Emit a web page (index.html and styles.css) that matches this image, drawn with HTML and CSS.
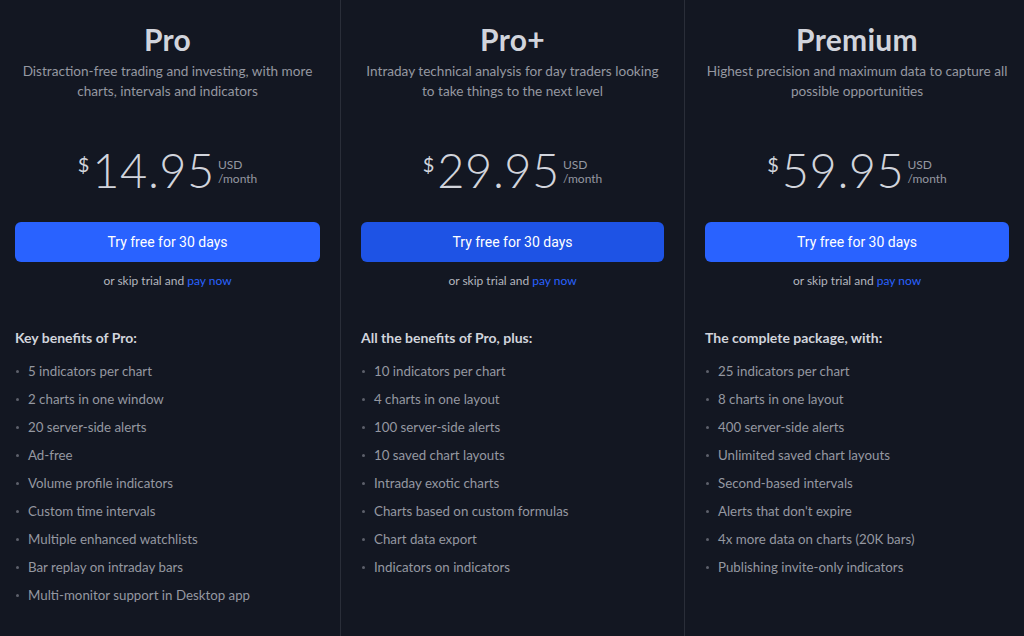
FILE: index.html
```html
<!DOCTYPE html>
<html lang="en">
<head>
<meta charset="utf-8">
<title>Plans</title>
<link rel="stylesheet" href="styles.css">
</head>
<body>
<main class="plans">
  <section class="plan">
    <h2 class="plan-title">Pro</h2>
    <p class="plan-desc">Distraction-free trading and investing, with more charts, intervals and indicators</p>
    <div class="price"><span class="cur">$</span><span class="amount">14.95</span><span class="unit"><span>USD</span><span>/month</span></span></div>
    <button class="cta">Try free for 30 days</button>
    <p class="skip">or skip trial and <a href="#">pay now</a></p>
    <h3 class="bhead">Key benefits of Pro:</h3>
    <ul class="benefits">
      <li>5 indicators per chart</li>
      <li>2 charts in one window</li>
      <li>20 server-side alerts</li>
      <li>Ad-free</li>
      <li>Volume profile indicators</li>
      <li>Custom time intervals</li>
      <li>Multiple enhanced watchlists</li>
      <li>Bar replay on intraday bars</li>
      <li>Multi-monitor support in Desktop app</li>
    </ul>
  </section>
  <section class="plan">
    <h2 class="plan-title">Pro+</h2>
    <p class="plan-desc">Intraday technical analysis for day traders looking to take things to the next level</p>
    <div class="price"><span class="cur">$</span><span class="amount">29.95</span><span class="unit"><span>USD</span><span>/month</span></span></div>
    <button class="cta cta-hover">Try free for 30 days</button>
    <p class="skip">or skip trial and <a href="#">pay now</a></p>
    <h3 class="bhead">All the benefits of Pro, plus:</h3>
    <ul class="benefits">
      <li>10 indicators per chart</li>
      <li>4 charts in one layout</li>
      <li>100 server-side alerts</li>
      <li>10 saved chart layouts</li>
      <li>Intraday exotic charts</li>
      <li>Charts based on custom formulas</li>
      <li>Chart data export</li>
      <li>Indicators on indicators</li>
    </ul>
  </section>
  <section class="plan">
    <h2 class="plan-title">Premium</h2>
    <p class="plan-desc">Highest precision and maximum data to capture all possible opportunities</p>
    <div class="price"><span class="cur">$</span><span class="amount">59.95</span><span class="unit"><span>USD</span><span>/month</span></span></div>
    <button class="cta">Try free for 30 days</button>
    <p class="skip">or skip trial and <a href="#">pay now</a></p>
    <h3 class="bhead">The complete package, with:</h3>
    <ul class="benefits">
      <li>25 indicators per chart</li>
      <li>8 charts in one layout</li>
      <li>400 server-side alerts</li>
      <li>Unlimited saved chart layouts</li>
      <li>Second-based intervals</li>
      <li>Alerts that don't expire</li>
      <li>4x more data on charts (20K bars)</li>
      <li>Publishing invite-only indicators</li>
    </ul>
  </section>
</main>
</body>
</html>
```

FILE: styles.css
```css
* { box-sizing: border-box; }
html, body { margin: 0; padding: 0; }
body {
  background: #131722;
  color: #d1d4dc;
  font-family: "Lato", "DejaVu Sans", sans-serif;
  width: 1024px;
  height: 636px;
  overflow: hidden;
}
.plans {
  display: grid;
  grid-template-columns: 346px 344px 344px;
  margin-left: -5px;
  height: 636px;
}
.plan {
  display: flex;
  flex-direction: column;
  padding: 20px 20px 0 20px;
  border-right: 1px solid #2a2e39;
}
.plan:last-child { border-right: none; }
.plan-title {
  margin: 0;
  text-align: center;
  font-size: 30px;
  line-height: 38px;
  font-weight: 700;
  color: #d1d4dc;
  letter-spacing: 0.3px;
}
.plan-desc {
  margin: 4px -2px 0;
  text-align: center;
  font-size: 13.6px;
  line-height: 19.5px;
  color: #9598a1;
  height: 40px;
}
.price {
  display: flex;
  justify-content: center;
  align-items: flex-start;
  margin-top: 43px;
  height: 50px;
}
.cur {
  font-weight: 400;
  font-size: 20px;
  line-height: 22px;
  margin-top: 8px;
  margin-right: 3px;
  color: #d1d4dc;
}
.amount {
  font-weight: 300;
  font-size: 47px;
  line-height: 50px;
  letter-spacing: 0.5px;
  color: #d1d4dc;
}
.unit {
  display: flex;
  flex-direction: column;
  font-size: 12px;
  line-height: 14px;
  color: #9598a1;
  margin-top: 13px;
  margin-left: 3px;
}
.cta {
  margin-top: 27px;
  height: 40px;
  border: none;
  border-radius: 6px;
  background: #2962ff;
  color: #ffffff;
  font-family: "Roboto", "Liberation Sans", sans-serif;
  font-size: 14px;
  font-weight: 400;
  cursor: pointer;
}
.cta-hover { background: #1e53e5; }
.skip {
  margin: 11px 0 0;
  text-align: center;
  font-size: 12px;
  line-height: 16px;
  color: #b2b5be;
}
.skip a { color: #2962ff; text-decoration: none; }
.bhead {
  margin: 39px 0 0;
  font-size: 14px;
  line-height: 20px;
  font-weight: 700;
  color: #d1d4dc;
}
.benefits {
  list-style: none;
  margin: 13px 0 0;
  padding: 0;
}
.benefits li {
  position: relative;
  padding-left: 13px;
  font-size: 13.3px;
  line-height: 20px;
  margin-bottom: 8px;
  color: #9598a1;
}
.benefits li::before {
  content: "";
  position: absolute;
  left: 1px;
  top: 9px;
  width: 3px;
  height: 3px;
  border-radius: 50%;
  background: #5d606b;
}
```
